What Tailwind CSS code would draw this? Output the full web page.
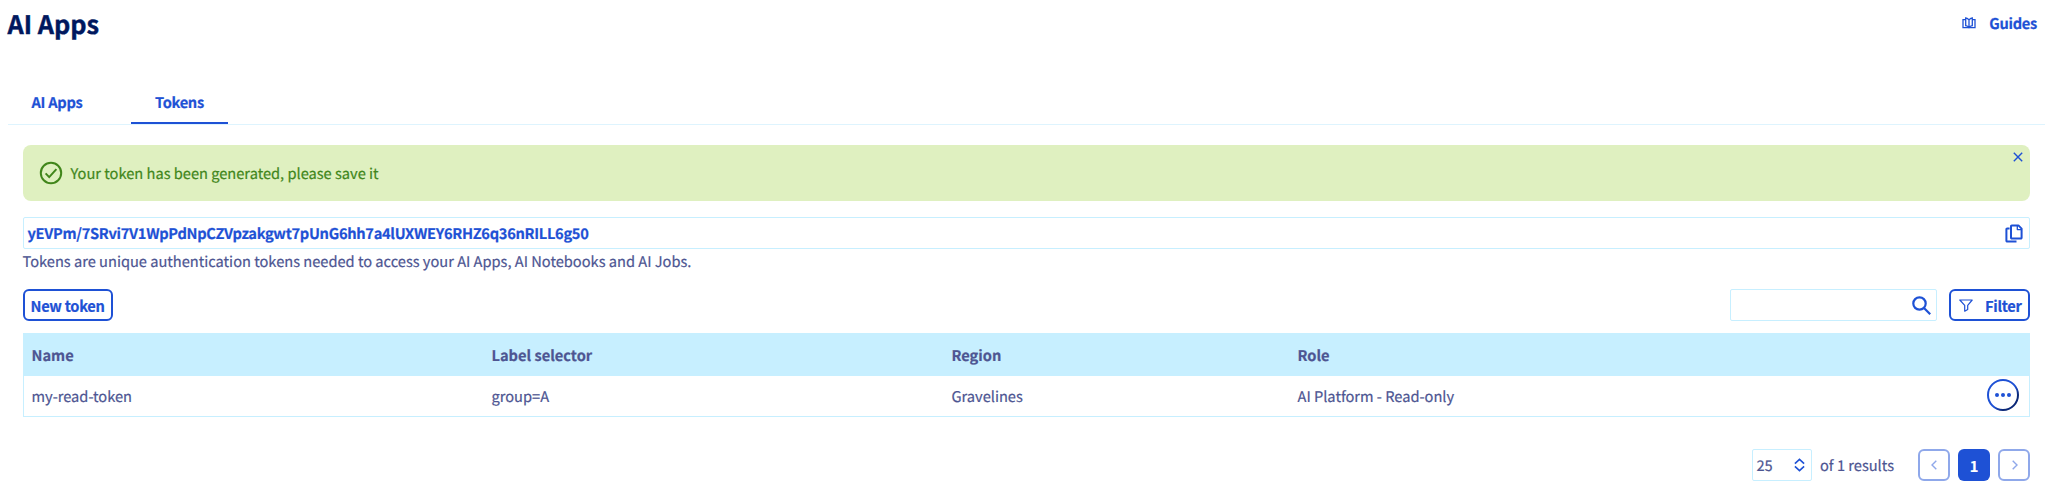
<!DOCTYPE html>
<html lang="en">
<head>
<meta charset="utf-8">
<title>AI Apps</title>
<script src="https://cdn.jsdelivr.net/npm/@tailwindcss/browser@4"></script>
</head>
<body class="h-[496px] overflow-hidden bg-white font-['Noto_Sans_CJK_SC','Noto_Sans',sans-serif] text-[14.63px] leading-5 whitespace-nowrap text-[#4d5592] [-webkit-text-stroke:0.2px] [text-rendering:geometricPrecision] [&_span]:pt-[2px]">
  <header class="flex h-[76px] items-start justify-between pt-[6px] pr-[14px] pl-[7.500px]">
    <h1 class="text-[25.3px] leading-9 font-bold text-[#00185e] [-webkit-text-stroke:0.4px]">AI Apps</h1>
    <a class="flex h-[34px] w-[75px] items-center justify-between font-bold tracking-[-0.28px] text-[#1e51d5]">
      <svg class="h-3 w-[14px]" viewBox="0 0 14 12" fill="none" stroke="currentColor" stroke-width="1.300"><path d="M3.400 2.600H1v8h12v-8h-2.400M7 3v7.600M7 3C6.200 1.800 5 1.200 3.700 1v7.600c1.300.2 2.500.8 3.300 2 .8-1.200 2-1.800 3.300-2V1C9 1.200 7.800 1.800 7 3Z"/></svg>
      <span>Guides</span>
    </a>
  </header>

  <nav class="mr-[6px] ml-2 flex h-[49px] border-b border-[#def4fe] font-bold tracking-[-0.28px] text-[#1e51d5]">
    <a class="flex h-12 w-[123px] items-center pl-[23.500px]"><span class="mt-1">AI Apps</span></a>
    <a class="flex h-12 w-[97px] items-center border-b-2 border-[#1e51d5] pl-6"><span class="mt-[6px]">Tokens</span></a>
  </nav>

  <main class="mr-[21px] ml-[23px] pt-5">
    <div class="flex h-14 items-center rounded-lg bg-[#dff0c0] pr-[7px] pl-4 text-[#41861b]">
      <svg class="size-6" viewBox="0 0 24 24" fill="none" stroke="currentColor" stroke-width="2"><circle cx="12" cy="12" r="10.200"/><path d="m6.600 12.400 3.600 3.700 7.200-8"/></svg>
      <span class="ml-[7.500px] flex-1">Your token has been generated, please save it</span>
      <svg class="mt-[7px] size-[10px] self-start text-[#1e51d5]" viewBox="0 0 10 10" fill="none" stroke="currentColor" stroke-width="1.400"><path d="m.8.8 8.400 8.400M9.200.8.800 9.200"/></svg>
    </div>

    <div class="mt-4 flex h-8 items-center justify-between rounded-[2px] border border-[#c7efff] pr-[6px] pl-[3.500px] text-[#1e51d5]">
      <span class="font-bold tracking-[-0.3px]">yEVPm/7SRvi7V1WpPdNpCZVpzakgwt7pUnG6hh7a4lUXWEY6RHZ6q36nRILL6g50</span>
      <svg class="h-[19px] w-[18px]" viewBox="0 0 18 19" fill="none" stroke="currentColor" stroke-width="2" stroke-linejoin="round"><path d="M6.800 1.400h6.600L16.600 4.600v9.200a.8.800 0 0 1-.8.800H6.800a.8.800 0 0 1-.8-.8V2.200a.8.800 0 0 1 .8-.8Z"/><path d="M12.300 1.600v4h4" stroke-width="1.300"/><path d="M4.600 4.500H2.200a.8.800 0 0 0-.8.800v11.500a.8.800 0 0 0 .8.800h9.300"/></svg>
    </div>
    <p class="mt-[3px] -ml-[0.500px]">Tokens are unique authentication tokens needed to access your AI Apps, AI Notebooks and AI Jobs.</p>

    <div class="mt-[17px] flex h-8 items-stretch">
      <button class="flex w-[90px] items-center rounded-md border-2 border-[#1e51d5] pl-[5.500px] font-bold tracking-[-0.28px] text-[#1e51d5]"><span>New token</span></button>
      <div class="mr-3 ml-auto flex w-[207px] items-center justify-end rounded-[2px] border border-[#c7efff] pr-[5px]">
        <svg class="size-[19px] text-[#1e51d5]" viewBox="0 0 19 19" fill="none" stroke="currentColor" stroke-width="2.200"><circle cx="7.500" cy="7.500" r="6.200"/><path d="m12 12 6.200 6.200"/></svg>
      </div>
      <button class="flex w-[81px] items-center rounded-md border-2 border-[#1e51d5] pl-2 font-bold tracking-[-0.28px] text-[#1e51d5]">
        <svg class="h-[13px] w-[14px]" viewBox="0 0 14 13" fill="none" stroke="currentColor" stroke-width="1.200" stroke-linejoin="round"><path d="M.8 1h12.400L8.700 6.300v4.100l-3 1.800V6.300Z"/></svg>
        <span class="ml-3">Filter</span>
      </button>
    </div>

    <section class="mt-3 h-[84px] border border-t-0 border-[#c7efff]">
      <div class="-mx-px grid h-[43px] grid-cols-[460px_460px_346px_1fr] items-center bg-[#c7efff] pl-[8.500px] font-bold">
        <span>Name</span>
        <span>Label selector</span>
        <span>Region</span>
        <span>Role</span>
      </div>
      <div class="grid h-10 grid-cols-[460px_460px_346px_1fr_32px] items-center pr-[10px] pl-[7.500px]">
        <span>my-read-token</span>
        <span>group=A</span>
        <span>Gravelines</span>
        <span>AI Platform - Read-only</span>
        <svg class="-mt-[2px] size-8" viewBox="0 0 32 32"><defs><linearGradient id="ring" x1="0" y1="0" x2="1" y2="1"><stop offset=".55" stop-color="#1e51d5"/><stop offset=".75" stop-color="#0b2877"/></linearGradient></defs><circle cx="16" cy="16" r="15" fill="none" stroke="url(#ring)" stroke-width="2"/><g fill="#1e51d5"><circle cx="10" cy="16" r="2"/><circle cx="16" cy="16" r="2"/><circle cx="22" cy="16" r="2"/></g></svg>
      </div>
    </section>

    <footer class="mt-8 flex h-8 items-center justify-end">
      <div class="flex h-8 w-[60px] items-center justify-between rounded-[2px] border border-[#c7efff] pr-[6px] pl-[3.500px]">
        <span>25</span>
        <svg class="h-[14px] w-[11px] text-[#1e51d5]" viewBox="0 0 11 14" fill="none" stroke="currentColor" stroke-width="1.600"><path d="m.9 5.600 4.600-4.300 4.600 4.300M.9 8.400l4.600 4.300 4.600-4.300"/></svg>
      </div>
      <span class="ml-2 w-[98px]">of 1 results</span>
      <div class="flex gap-2">
        <button class="flex size-8 items-center justify-center rounded-md border-2 border-[#8fa8ea] text-[#8fa8ea]"><svg class="-ml-px h-[10px] w-[6px]" viewBox="0 0 6 10" fill="none" stroke="currentColor" stroke-width="1.400"><path d="M5.300.7 1 5l4.300 4.300"/></svg></button>
        <button class="flex size-8 items-center justify-center rounded-md bg-[#1e51d5] font-bold text-white"><span>1</span></button>
        <button class="flex size-8 items-center justify-center rounded-md border-2 border-[#8fa8ea] text-[#8fa8ea]"><svg class="ml-px h-[10px] w-[6px]" viewBox="0 0 6 10" fill="none" stroke="currentColor" stroke-width="1.400"><path d="M.7.7 5 5 .7 9.300"/></svg></button>
      </div>
    </footer>
  </main>
</body>
</html>
